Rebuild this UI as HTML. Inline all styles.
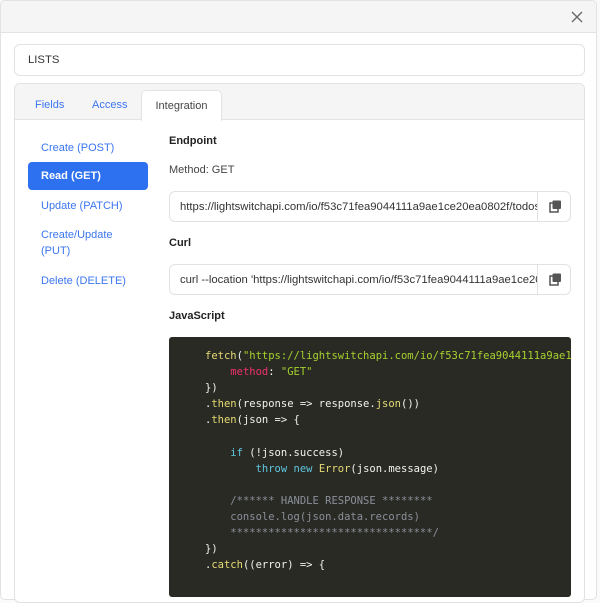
<!DOCTYPE html>
<html><head><style>
*{box-sizing:border-box;margin:0;padding:0}
body{width:600px;height:577px;overflow:hidden;background:#fafafa;font-family:"Liberation Sans",sans-serif;font-size:11px;color:#333;position:relative}
.modal{position:absolute;left:0;top:0;width:597px;height:600px;background:#fff;border:1px solid #e2e2e2;border-radius:5px;overflow:hidden}
.hdr{height:32px;background:#f5f5f5;border-bottom:1px solid #e3e3e3;position:relative}
.x{position:absolute;left:569px;top:9px;width:14px;height:14px}
.abs{position:absolute}
.inp{position:absolute;border:1px solid #e2e2e2;border-radius:6px;background:#fff;white-space:nowrap;overflow:hidden;font-size:11.3px;color:#333;padding-left:10px}
.card{position:absolute;left:14px;top:83px;width:571px;height:520px;border:1px solid #e2e2e2;border-radius:6px;overflow:hidden;background:#fff}
.tabs{height:36px;background:#f5f5f5;border-bottom:1px solid #e3e3e3;position:relative}
.tab{position:absolute;top:15px;color:#3b76f0;font-size:11px}
.act{position:absolute;left:126px;top:6px;width:81px;height:31px;background:#fff;border:1px solid #e3e3e3;border-bottom:none;border-radius:5px 5px 0 0;color:#444;text-align:center;padding-top:9px}
.nav{position:absolute;color:#3b76f0;font-size:11px;line-height:16px}
.lbl{position:absolute;font-weight:bold;font-size:11px;color:#222}
.btn{position:absolute;width:34px;height:31px;border:1px solid #e2e2e2;border-radius:0 6px 6px 0;background:#fff}
.code{position:absolute;left:169px;top:337px;width:402px;height:260px;background:#2a2a25;border-radius:3px;overflow:hidden;font-family:"DejaVu Sans Mono","Liberation Mono",monospace;font-size:10.5px;line-height:16.1px;color:#f2f2ee;padding:11px 0 0 36px;white-space:pre}
.g{color:#a6d12e}.p{color:#f0306f}.y{color:#e6db74}.b{color:#5fc6e0}.c{color:#8a8f99}
</style></head><body>
<div class="modal">
<div class="hdr"><svg class="x" viewBox="0 0 14 14"><path d="M2 2L12 12M12 2L2 12" stroke="#666" stroke-width="1.3"/></svg></div>
</div>
<div class="inp" style="left:14px;top:44px;width:571px;height:32px;line-height:31px;padding-left:13px">LISTS</div>
<div class="card">
<div class="tabs"><span class="tab" style="left:20px">Fields</span><span class="tab" style="left:77px">Access</span><div class="act">Integration</div></div>
</div>
<div class="nav" style="left:41px;top:140px">Create (POST)</div>
<div class="abs" style="left:28px;top:162px;width:120px;height:28px;background:#2d71f0;border-radius:4px;color:#fff;font-weight:bold;padding:8px 0 0 13px;font-size:11px">Read (GET)</div>
<div class="nav" style="left:41px;top:198px">Update (PATCH)</div>
<div class="nav" style="left:41px;top:227px">Create/Update<br>(PUT)</div>
<div class="nav" style="left:41px;top:273px">Delete (DELETE)</div>
<div class="lbl" style="left:169px;top:135px">Endpoint</div>
<div class="abs" style="left:169px;top:164px;color:#444">Method: GET</div>
<div class="inp" style="left:169px;top:191px;width:369px;height:31px;line-height:30px;border-radius:6px 0 0 6px">https://lightswitchapi.com/io/f53c71fea9044111a9ae1ce20ea0802f/todos</div>
<div class="btn" style="left:537px;top:191px"><svg width="34" height="31" viewBox="0 0 34 31"><rect x="12" y="11" width="8" height="9" fill="none" stroke="#555" stroke-width="1.5"/><rect x="14.5" y="8.5" width="8.5" height="8.5" rx="1" fill="#555"/></svg></div>
<div class="lbl" style="left:169px;top:237px">Curl</div>
<div class="inp" style="left:169px;top:264px;width:369px;height:31px;line-height:30px;border-radius:6px 0 0 6px">curl --location 'https://lightswitchapi.com/io/f53c71fea9044111a9ae1ce20</div>
<div class="btn" style="left:537px;top:264px"><svg width="34" height="31" viewBox="0 0 34 31"><rect x="12" y="11" width="8" height="9" fill="none" stroke="#555" stroke-width="1.5"/><rect x="14.5" y="8.5" width="8.5" height="8.5" rx="1" fill="#555"/></svg></div>
<div class="lbl" style="left:169px;top:310px">JavaScript</div>
<div class="code"><span class="y">fetch</span>(<span class="g">"https://lightswitchapi.com/io/f53c71fea9044111a9ae1ce20ea0802f/todos"</span>, {
    <span class="p">method</span>: <span class="g">"GET"</span>
})
.<span class="y">then</span>(response =&gt; response.<span class="y">json</span>())
.<span class="y">then</span>(json =&gt; {

    <span class="b">if</span> (!json.success)
        <span class="b">throw new</span> <span class="y">Error</span>(json.message)

    <span class="c">/****** HANDLE RESPONSE ********
    console.log(json.data.records)
    ********************************/</span>
})
.<span class="y">catch</span>((error) =&gt; {
</div>
</body></html>
